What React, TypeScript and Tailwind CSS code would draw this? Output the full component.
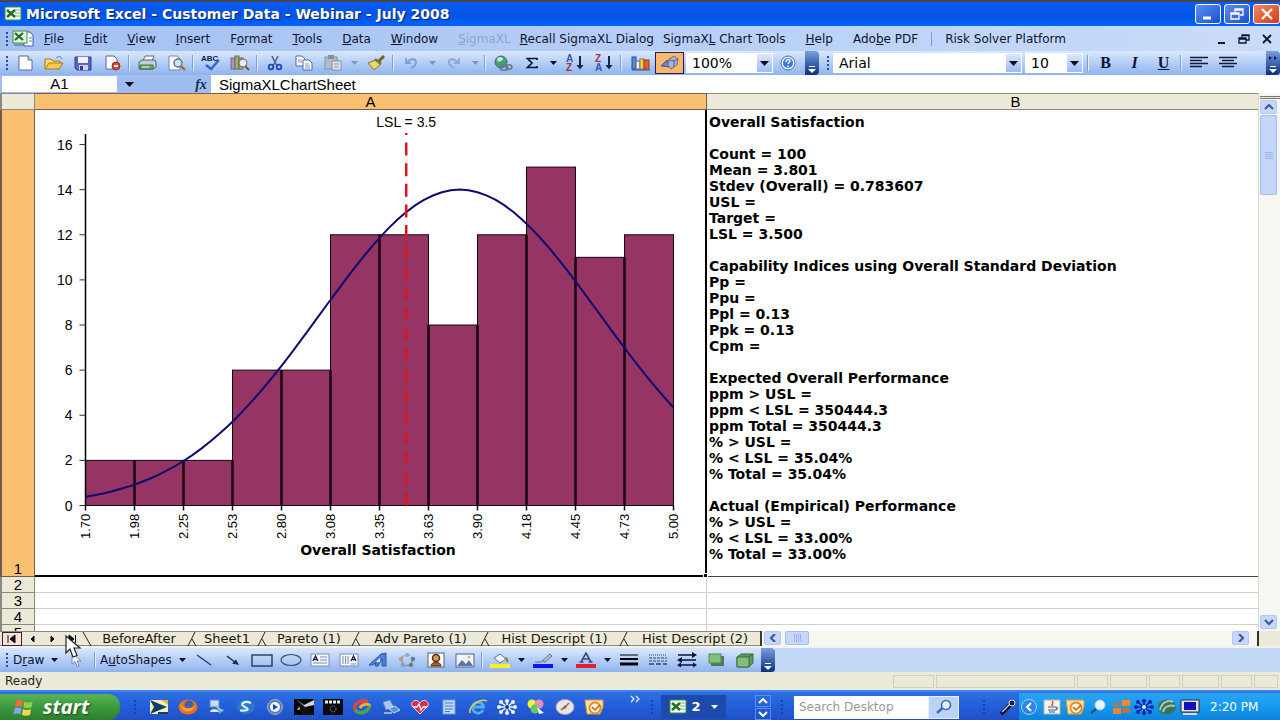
import { useState, type ReactNode } from 'react';

const FONT_UI = "font-['DejaVu_Sans',Verdana,sans-serif]";
const FONT_CELL = "font-['Liberation_Sans',Arial,sans-serif]";

/* ---------- shared bits ---------- */

function Icon({ children, w = 20, h = 16 }: { children: ReactNode; w?: number; h?: number }) {
  return (
    <svg width={w} height={h} viewBox={`0 0 ${w} ${h}`} fill="none" className="shrink-0" aria-hidden="true">
      {children}
    </svg>
  );
}

function ToolButton({ label, children, active }: { label: string; children: ReactNode; active?: boolean }) {
  return (
    <button
      type="button"
      aria-label={label}
      className={`flex h-[22px] w-[29px] shrink-0 items-center justify-center ${
        active ? 'border border-[#1c1c6e] bg-[#fdb768]' : ''
      }`}
    >
      {children}
    </button>
  );
}

function ArrowButton({ label, dim }: { label: string; dim?: boolean }) {
  return (
    <button type="button" aria-label={label} className="flex h-[22px] w-[14px] shrink-0 items-center justify-center">
      <Icon w={7} h={4}>
        <path d="M0 0h7L3.5 4z" fill={dim ? '#7f95bd' : '#0b0b1c'} />
      </Icon>
    </button>
  );
}

function Sep() {
  return <span className="mx-[2px] h-4 w-[2px] shrink-0 border-l border-[#7d9bd3] bg-[#e4eefc]" />;
}

function Grip({ dark }: { dark?: boolean }) {
  const color = dark ? '#1743a8' : '#2c4f96';
  return (
    <Icon w={4} h={14}>
      {[0, 4, 8, 12].map((y) => (
        <rect key={y} x="0" y={y} width="2" height="2" fill={color} />
      ))}
    </Icon>
  );
}

function EndCap({ more }: { more?: boolean }) {
  return (
    <button
      type="button"
      aria-label="Toolbar options"
      className="flex h-6 w-[14px] shrink-0 flex-col items-center justify-end rounded-r-sm bg-linear-to-b from-[#7a9fe0] to-[#0b2e80] pb-[2px]"
    >
      <Icon w={8} h={20}>
        {more && <path d="M0 3l3 2-3 2zM5 3l3 2-3 2z" fill="#0b1c4c" />}
        <path d="M1 13.500h6" stroke="#fff" />
        <path d="M0 16h8l-4 4z" fill="#fff" />
      </Icon>
    </button>
  );
}

function DropBox({ label, value, width }: { label: string; value: string; width: string }) {
  return (
    <div className="flex h-5 shrink-0 items-center bg-white">
      <select
        aria-label={label}
        className={`h-5 appearance-none bg-white pl-[6px] text-[14px] leading-5 text-black outline-none ${width}`}
      >
        <option>{value}</option>
      </select>
      <span className="mr-px flex h-[18px] w-[15px] items-center justify-center bg-linear-to-b from-[#dce9fc] to-[#9dbcf0]">
        <Icon w={9} h={5}>
          <path d="M0 0h9L4.5 5z" fill="#0b0b1c" />
        </Icon>
      </span>
    </div>
  );
}

/* ---------- icons ---------- */

const ExcelIcon = () => (
  <Icon w={18} h={16}>
    <rect x="1" y="1" width="16" height="13" rx="1" fill="#f4fbf1" stroke="#3d9440" />
    <path d="M11 4h5M11 7h5M11 10h5" stroke="#7bb77d" />
    <path d="M3 4l8 7M11 4l-8 7" stroke="#1f6f27" strokeWidth="2.4" />
  </Icon>
);

const ExcelDocIcon = () => (
  <Icon w={22} h={18}>
    <path d="M12 2h6l3 3v11h-9z" fill="#fff" stroke="#3c5fae" />
    <rect x="1" y="1" width="14" height="12" fill="#e2f4dd" stroke="#3d9440" />
    <path d="M3 3l8 7M11 3l-8 7" stroke="#1f6f27" strokeWidth="2.200" />
    <path d="M17 8h3M17 11h3" stroke="#5d7cc0" />
    <path d="M2 15h10" stroke="#4c5a86" />
  </Icon>
);

const NewIcon = () => (
  <Icon>
    <path d="M4 1h9l4 4v10H4z" fill="#fff" stroke="#5a6b95" />
    <path d="M13 1v4h4" fill="#cfdcf5" stroke="#5a6b95" />
  </Icon>
);
const OpenIcon = () => (
  <Icon>
    <path d="M1 14V4h6l2 2h7v3" fill="#fbd873" stroke="#a8781b" />
    <path d="M1 14l4-6h14l-4 6z" fill="#ffc94f" stroke="#a8781b" />
    <path d="M12 3c2-2 5-2 6 1" stroke="#4a7fc9" />
  </Icon>
);
const SaveIcon = () => (
  <Icon>
    <path d="M2 2h16v13H4l-2-2z" fill="#5b63c4" stroke="#343b91" />
    <rect x="5" y="2" width="10" height="6" fill="#f0f3fd" />
    <rect x="6" y="10" width="9" height="5" fill="#cdd3ea" />
    <rect x="7" y="11" width="3" height="4" fill="#343b91" />
  </Icon>
);
const PermissionIcon = () => (
  <Icon>
    <path d="M4 1h8l3 3v10H4z" fill="#fff" stroke="#5a6b95" />
    <circle cx="14" cy="11" r="4" fill="#d8492c" stroke="#a12c15" />
    <path d="M12 11h4" stroke="#fff" strokeWidth="2" />
  </Icon>
);
const PrintIcon = () => (
  <Icon>
    <path d="M6 6l2-5h9l-2 5z" fill="#fff" stroke="#5b6d84" />
    <path d="M2 7l3-2h13l1 2v5l-3 2H2z" fill="#c3cfd2" stroke="#53646f" />
    <path d="M3 10h13v4H3z" fill="#71a873" stroke="#3d6e46" />
    <path d="M5 12h7" stroke="#e9f5e4" />
  </Icon>
);
const PreviewIcon = () => (
  <Icon>
    <path d="M3 1h8l3 3v11H3z" fill="#fff" stroke="#6f86b8" />
    <circle cx="12" cy="8" r="4" fill="#cfe2f6" stroke="#5f6c80" strokeWidth="1.4" />
    <path d="M15 11l4 4" stroke="#b5621f" strokeWidth="2.4" />
  </Icon>
);
const SpellIcon = () => (
  <Icon h={18}>
    <text x="0" y="7" className="fill-[#0d1a4d] font-['Liberation_Sans',Arial,sans-serif] text-[8px] font-bold">
      ABC
    </text>
    <path d="M5 11l5 4 8-9" stroke="#3d63c9" strokeWidth="2.4" />
  </Icon>
);
const ResearchIcon = () => (
  <Icon>
    <rect x="1" y="3" width="4" height="11" fill="#b48cc6" stroke="#7c5d9c" />
    <rect x="5" y="1" width="4" height="13" fill="#8bb874" stroke="#567e45" />
    <rect x="9" y="3" width="4" height="11" fill="#dc9a6a" stroke="#93563a" />
    <circle cx="13" cy="8" r="4" fill="#e3edf8" stroke="#616f7f" />
    <path d="M15 11l4 4" stroke="#7a5a2a" strokeWidth="2" />
  </Icon>
);
const CutIcon = () => (
  <Icon>
    <path d="M7 1l5 10M13 1L8 11" stroke="#49679e" strokeWidth="1.6" />
    <circle cx="6" cy="12" r="2.3" stroke="#1e4bb3" strokeWidth="1.8" />
    <circle cx="14" cy="12" r="2.3" stroke="#1e4bb3" strokeWidth="1.8" />
  </Icon>
);
const CopyIcon = () => (
  <Icon>
    <path d="M2 1h6l3 3v7H2z" fill="#fff" stroke="#4a6bb5" />
    <path d="M9 5h6l3 3v7H9z" fill="#fff" stroke="#4a6bb5" />
    <path d="M4 5h4M4 7h4M11 9h4M11 11h5M11 13h5" stroke="#7c97cf" />
  </Icon>
);
const PasteIcon = () => (
  <Icon>
    <rect x="2" y="2" width="12" height="12" fill="#b3bccb" stroke="#8791a3" />
    <rect x="5" y="0" width="6" height="4" fill="#8791a3" />
    <path d="M9 6h9v9H9z" fill="#e1e6ee" stroke="#8791a3" />
    <path d="M11 9h5M11 12h5" stroke="#8791a3" />
  </Icon>
);
const PainterIcon = () => (
  <Icon>
    <path d="M18 1l-6 6" stroke="#7a5a1e" strokeWidth="3" />
    <path d="M2 8l8-3 5 4-7 6z" fill="#e9d46e" stroke="#8c7423" />
    <path d="M9 4l6 5" stroke="#6d7a35" strokeWidth="2.500" />
  </Icon>
);
const UndoIcon = () => (
  <Icon>
    <path d="M5 3v5h5M6 8c3-5 10-5 9 0-.5 3-3 4-5 5" stroke="#7e9fd8" strokeWidth="1.8" />
  </Icon>
);
const RedoIcon = () => (
  <Icon>
    <path d="M15 3v5h-5M14 8C11 3 4 3 5 8c.5 3 3 4 5 5" stroke="#8fa7d2" strokeWidth="1.8" />
  </Icon>
);
const LinkIcon = () => (
  <Icon>
    <circle cx="8" cy="7" r="6" fill="#4a9d6e" stroke="#3268a2" />
    <path d="M4 4c2-3 6-2 6 0s-3 2-5 3z" fill="#c2e8c3" />
    <ellipse cx="11" cy="13" rx="4" ry="2.2" stroke="#6b7787" strokeWidth="1.5" />
    <ellipse cx="16" cy="12" rx="3" ry="2.2" stroke="#6b7787" strokeWidth="1.5" />
  </Icon>
);
const SumIcon = () => (
  <Icon>
    <path d="M15 5V3.500H5.500L10 8l-4.500 4.500H15V11" stroke="#0d1433" strokeWidth="1.700" />
  </Icon>
);
function SortIcon({ top, bottom, topColor, bottomColor }: { top: string; bottom: string; topColor: string; bottomColor: string }) {
  return (
    <Icon h={18}>
      <text x="1" y="8" fill={topColor} className="font-['Liberation_Sans',Arial,sans-serif] text-[10px] font-bold">
        {top}
      </text>
      <text x="1" y="17" fill={bottomColor} className="font-['Liberation_Sans',Arial,sans-serif] text-[10px] font-bold">
        {bottom}
      </text>
      <path d="M15 2v12" stroke="#1b2347" strokeWidth="2" />
      <path d="M11.500 11h7L15 15.500z" fill="#1b2347" />
    </Icon>
  );
}
const ChartIcon = () => (
  <Icon>
    <rect x="1" y="2" width="4" height="12" fill="#5d89d2" stroke="#244a91" />
    <rect x="5" y="6" width="4" height="8" fill="#e9eef8" stroke="#5a6b95" />
    <rect x="9" y="4" width="4" height="10" fill="#f3cf58" stroke="#9b7a1a" />
    <rect x="13" y="5" width="5" height="9" fill="#e2602c" stroke="#973f10" />
    <path d="M1 15h18" stroke="#3c4c78" />
  </Icon>
);
const DrawingIcon = () => (
  <Icon>
    <path d="M1 11l6-6 2 7z" fill="#6c85c9" stroke="#3f57a1" />
    <path d="M9 4l5-3 4 3-1 6-6 4-3-4z" fill="#a9b1cc" stroke="#6b7294" />
    <path d="M9 5l5 1 4-2M14 6v6" stroke="#5b648c" />
  </Icon>
);
const HelpIcon = () => (
  <Icon>
    <circle cx="10" cy="8" r="7" fill="#e8f1fe" stroke="#4671bd" />
    <circle cx="10" cy="8" r="5" fill="#3f79d6" />
    <path d="M8 7c0-3 4-3 4-1 0 1.500-2 1.500-2 3M10 10.500v1.500" stroke="#fff" strokeWidth="1.4" />
  </Icon>
);
const AlignIcon = ({ center }: { center?: boolean }) => (
  <Icon h={14}>
    <path d={center ? 'M1 1.500h18M4 4.500h12M1 7.500h18M4 10.500h12' : 'M1 1.500h18M1 4.500h12M1 7.500h18M1 10.500h12'} stroke="#101a3c" strokeWidth="1.500" />
  </Icon>
);

/* ---------- title + menus ---------- */

function TitleBar() {
  return (
    <header className="flex h-[26px] shrink-0 items-center gap-1 border-t-2 border-[#46464a] bg-linear-to-b from-[#0a5cf5] via-[#0453e4] to-[#0563fb] pl-1">
      <ExcelIcon />
      <h1 className="text-[14px] leading-5 font-bold text-white [text-shadow:1px_1px_1px_#0a246a]">
        Microsoft Excel - Customer Data - Webinar - July 2008
      </h1>
      <div className="ml-auto flex gap-[3px]">
        <button type="button" aria-label="Minimize" className="flex h-5 w-[26px] items-center justify-center rounded-[3px] border border-white bg-linear-to-br from-[#5b8df5] to-[#1a4fd0]">
          <Icon w={14} h={12}>
            <path d="M2 10h8" stroke="#fff" strokeWidth="3" />
          </Icon>
        </button>
        <button type="button" aria-label="Restore" className="flex h-5 w-[26px] items-center justify-center rounded-[3px] border border-white bg-linear-to-br from-[#5b8df5] to-[#1a4fd0]">
          <Icon w={14} h={12}>
            <path d="M5 4V1h8v6h-3M5 2h8M1 5h8v6H1zM1 6h8" stroke="#fff" strokeWidth="1.300" />
          </Icon>
        </button>
        <button type="button" aria-label="Close" className="flex h-5 w-[27px] items-center justify-center rounded-[3px] border border-white bg-linear-to-br from-[#ee8560] to-[#d03c17]">
          <Icon w={14} h={12}>
            <path d="M2 1l10 10M12 1L2 11" stroke="#fff" strokeWidth="2.200" />
          </Icon>
        </button>
      </div>
    </header>
  );
}

const menus = [
  { pre: '', key: 'F', post: 'ile' },
  { pre: '', key: 'E', post: 'dit' },
  { pre: '', key: 'V', post: 'iew' },
  { pre: '', key: 'I', post: 'nsert' },
  { pre: 'F', key: 'o', post: 'rmat' },
  { pre: '', key: 'T', post: 'ools' },
  { pre: '', key: 'D', post: 'ata' },
  { pre: '', key: 'W', post: 'indow' },
  { pre: '', key: 'S', post: 'igmaXL', off: true },
  { pre: '', key: 'R', post: 'ecall SigmaXL Dialog', tight: true },
  { pre: 'SigmaX', key: 'L', post: ' Chart Tools', tight: true },
  { pre: '', key: 'H', post: 'elp' },
  { pre: 'Ado', key: 'b', post: 'e PDF' },
];

function MenuBar() {
  return (
    <nav className="flex h-[25px] shrink-0 items-center bg-linear-to-r from-[#a3c0f3] to-[#c9dcfa] pl-[6px] text-[12px] text-[#0e1430]">
      <Grip />
      <span className="ml-[2px]">
        <ExcelDocIcon />
      </span>
      <ul className="flex items-center">
        {menus.map((m) => (
          <li key={m.key + m.post} className={m.tight ? 'ml-[9px]' : 'ml-5 first:ml-[10px]'}>
            <button type="button" disabled={m.off} className={m.off ? 'text-[#8fa3cc]' : ''}>
              {m.pre}
              <u>{m.key}</u>
              {m.post}
            </button>
          </li>
        ))}
      </ul>
      <span className="mx-[13px] h-[14px] w-px bg-[#7d9bd3]" />
      <button type="button">Risk Solver Platform</button>
      <div className="mr-[6px] ml-auto flex gap-[9px]">
        <button type="button" aria-label="Minimize workbook">
          <Icon w={14} h={12}>
            <path d="M4 10h7" stroke="#0e1430" strokeWidth="2" />
          </Icon>
        </button>
        <button type="button" aria-label="Restore workbook">
          <Icon w={14} h={12}>
            <path d="M5 4V2h7v5h-3M5 2.500h7M2 5h7v5H2zM2 6h7" stroke="#0e1430" strokeWidth="1.300" />
          </Icon>
        </button>
        <button type="button" aria-label="Close workbook">
          <Icon w={14} h={12}>
            <path d="M3 2l8 8M11 2l-8 8" stroke="#0e1430" strokeWidth="1.800" />
          </Icon>
        </button>
      </div>
    </nav>
  );
}

/* ---------- toolbars ---------- */

function Toolbar() {
  return (
    <div className="flex h-6 shrink-0 items-center bg-linear-to-b from-[#dae8fd] to-[#8fb3ee] pl-[6px]">
      <Grip />
      <ToolButton label="New"><NewIcon /></ToolButton>
      <ToolButton label="Open"><OpenIcon /></ToolButton>
      <ToolButton label="Save"><SaveIcon /></ToolButton>
      <ToolButton label="Permission"><PermissionIcon /></ToolButton>
      <Sep />
      <ToolButton label="Print"><PrintIcon /></ToolButton>
      <ToolButton label="Print Preview"><PreviewIcon /></ToolButton>
      <Sep />
      <ToolButton label="Spelling"><SpellIcon /></ToolButton>
      <ToolButton label="Research"><ResearchIcon /></ToolButton>
      <Sep />
      <ToolButton label="Cut"><CutIcon /></ToolButton>
      <ToolButton label="Copy"><CopyIcon /></ToolButton>
      <ToolButton label="Paste"><PasteIcon /></ToolButton>
      <ArrowButton label="Paste options" dim />
      <ToolButton label="Format Painter"><PainterIcon /></ToolButton>
      <Sep />
      <ToolButton label="Undo"><UndoIcon /></ToolButton>
      <ArrowButton label="Undo list" dim />
      <ToolButton label="Redo"><RedoIcon /></ToolButton>
      <ArrowButton label="Redo list" dim />
      <Sep />
      <ToolButton label="Hyperlink"><LinkIcon /></ToolButton>
      <ToolButton label="AutoSum"><SumIcon /></ToolButton>
      <ArrowButton label="More functions" />
      <ToolButton label="Sort Ascending">
        <SortIcon top="A" bottom="Z" topColor="#3559b5" bottomColor="#a8324a" />
      </ToolButton>
      <ToolButton label="Sort Descending">
        <SortIcon top="Z" bottom="A" topColor="#a8324a" bottomColor="#3559b5" />
      </ToolButton>
      <Sep />
      <span className="w-[2px]" />
      <ToolButton label="Chart Wizard"><ChartIcon /></ToolButton>
      <ToolButton label="Drawing" active><DrawingIcon /></ToolButton>
      <span className="w-[2px]" />
      <DropBox label="Zoom" value="100%" width="w-[71px]" />
      <ToolButton label="Help"><HelpIcon /></ToolButton>
      <span className="w-[3px]" />
      <EndCap />
      <span className="w-2" />
      <Grip />
      <span className="w-[2px]" />
      <DropBox label="Font" value="Arial" width="w-[173px]" />
      <span className="w-[3px]" />
      <DropBox label="Font Size" value="10" width="w-[42px]" />
      <span className="w-[2px]" />
      <Sep />
      <div className="flex font-['Liberation_Serif',serif] text-[16px] font-bold text-[#0d1433]">
        <button type="button" className="w-[29px]">B</button>
        <button type="button" className="w-[29px] italic">I</button>
        <button type="button" className="w-[29px] underline">U</button>
      </div>
      <Sep />
      <ToolButton label="Align Left"><AlignIcon /></ToolButton>
      <ToolButton label="Center"><AlignIcon center /></ToolButton>
      <span className="ml-auto">
        <EndCap more />
      </span>
    </div>
  );
}

function FormulaBar() {
  const [formula, setFormula] = useState('SigmaXLChartSheet');
  return (
    <div className={`flex h-[18px] shrink-0 items-stretch bg-[#9fbdf1] pl-[2px] text-[15px] ${FONT_CELL}`}>
      <input aria-label="Name Box" defaultValue="A1" className="my-px w-[115px] bg-white text-center leading-4 outline-none" />
      <button type="button" aria-label="Name list" className="flex w-6 items-center justify-center">
        <Icon w={9} h={5}>
          <path d="M0 0h9L4.500 5z" fill="#0b0b1c" />
        </Icon>
      </button>
      <button type="button" aria-label="Insert Function" className="ml-auto w-5 font-['Liberation_Serif',serif] text-[14px] leading-[17px] font-bold text-[#1c2750] italic">
        fx
      </button>
      <input
        aria-label="Formula Bar"
        value={formula}
        onChange={(e) => setFormula(e.target.value)}
        className="w-[calc(100%-209px)] shrink-0 bg-white pl-2 leading-[17px] outline-none"
      />
    </div>
  );
}

/* ---------- histogram ---------- */

const counts = [2, 2, 2, 6, 6, 12, 12, 8, 12, 15, 11, 12];
const xLabels = ['1.70', '1.98', '2.25', '2.53', '2.80', '3.08', '3.35', '3.63', '3.90', '4.18', '4.45', '4.73', '5.00'];
const yLabels = [0, 2, 4, 6, 8, 10, 12, 14, 16];

const X0 = 50.5;
const BIN = 49;
const Y0 = 395.5;
const UNIT = 22.56;
const MEAN = 3.801;
const SD = 0.783607;
const LSL = 3.5;

const toX = (v: number) => X0 + ((v - 1.7) / 3.3) * BIN * 12;
const toY = (n: number) => Y0 - n * UNIT;

const curve = Array.from({ length: 67 }, (_, i) => {
  const v = 1.7 + i * 0.05;
  const n = (27.5 / (SD * Math.sqrt(2 * Math.PI))) * Math.exp(-((v - MEAN) ** 2) / (2 * SD * SD));
  return `${toX(v).toFixed(1)},${toY(n).toFixed(1)}`;
}).join(' ');

function Histogram() {
  return (
    <svg width="670" height="464" viewBox="0 0 670 464" role="img" aria-label="Histogram of Overall Satisfaction" className={FONT_CELL}>
      {counts.map((n, i) => (
        <rect key={i} x={X0 + i * BIN} y={toY(n)} width={BIN} height={n * UNIT} fill="#963464" stroke="#14040d" />
      ))}
      {counts.slice(1).map((n, i) => (
        <path key={i} d={`M${X0 + (i + 1) * BIN} ${toY(Math.min(n, counts[i]))}V${Y0}`} stroke="#14040d" strokeWidth="2.500" />
      ))}
      <path d={`M${X0} 24V${Y0}`} stroke="#000" strokeWidth="1.500" />
      {yLabels.map((n) => (
        <g key={n}>
          <path d={`M${X0 - 6} ${toY(n)}h6`} stroke="#333" />
          <text x={X0 - 13} y={toY(n) + 5} textAnchor="end" className="text-[14px]">
            {n}
          </text>
        </g>
      ))}
      {xLabels.map((label, i) => (
        <g key={label}>
          <path d={`M${X0 + i * BIN} ${Y0}v5`} stroke="#111" strokeWidth="1.500" />
          <text transform={`translate(${X0 + i * BIN + 4} 429) rotate(-90)`} className="text-[13px]">
            {label}
          </text>
        </g>
      ))}
      <polyline points={curve} fill="none" stroke="#0b0b70" strokeWidth="2" />
      <path d={`M${toX(LSL)} 23v${Y0 - 23}`} stroke="#e0141e" strokeWidth="2.500" strokeDasharray="13 7.600" strokeDashoffset="11" />
      <text x={toX(LSL)} y="17" textAnchor="middle" className="text-[14px]">
        LSL = 3.5
      </text>
      <text x="343" y="445" textAnchor="middle" className="font-['DejaVu_Sans',Verdana,sans-serif] text-[14px] font-bold">
        Overall Satisfaction
      </text>
    </svg>
  );
}

/* ---------- sheet ---------- */

const stats = [
  'Overall Satisfaction',
  '',
  'Count = 100',
  'Mean = 3.801',
  'Stdev (Overall) = 0.783607',
  'USL =',
  'Target =',
  'LSL = 3.500',
  '',
  'Capability Indices using Overall Standard Deviation',
  'Pp =',
  'Ppu =',
  'Ppl = 0.13',
  'Ppk = 0.13',
  'Cpm =',
  '',
  'Expected Overall Performance',
  'ppm > USL =',
  'ppm < LSL = 350444.3',
  'ppm Total = 350444.3',
  '% > USL =',
  '% < LSL = 35.04%',
  '% Total = 35.04%',
  '',
  'Actual (Empirical) Performance',
  '% > USL =',
  '% < LSL = 33.00%',
  '% Total = 33.00%',
];

function Sheet() {
  return (
    <div className="min-w-0 flex-1 overflow-hidden bg-white">
      <table className="w-full table-fixed border-separate border-spacing-0 text-[15px] leading-[15px]">
        <colgroup>
          <col className="w-[35px]" />
          <col className="w-[672px]" />
          <col />
        </colgroup>
        <thead>
          <tr className="h-[17px]">
            <td className="border-t border-r border-b border-l-2 border-[#8a8a80] bg-[#ece9d8]" />
            <th className="border-t border-r border-b border-[#7a5f50] bg-[#fbc070] p-0 font-normal">A</th>
            <th className="border-t border-b border-[#8a8a80] bg-[#ece9d8] p-0 pl-[66px] font-normal">B</th>
          </tr>
        </thead>
        <tbody>
          <tr className="h-[467px]">
            <th className="border-r border-b border-l-2 border-[#6d5a5a] bg-[#fbc070] p-0 align-bottom font-normal">1</th>
            <td className="relative border-r-2 border-b-2 border-black p-0 align-top">
              <Histogram />
              <span className="absolute -right-[3px] -bottom-[3px] size-[5px] border border-white bg-black" />
            </td>
            <td className="border-b border-[#444] p-0 pt-1 pl-[2px] align-top font-bold">
              <ul className={FONT_UI + ' text-[14px] leading-4'}>
                {stats.map((line, i) => (
                  <li key={i} className="h-4 whitespace-nowrap">
                    {line}
                  </li>
                ))}
              </ul>
            </td>
          </tr>
          {[2, 3, 4, 5].map((n) => (
            <tr key={n} className="h-4">
              <th className="border-r border-b border-l-2 border-[#8a8a80] bg-[#ece9d8] p-0 font-normal">{n}</th>
              <td className="border-r border-b border-[#d0d0d0] p-0" />
              <td className="border-b border-[#d0d0d0] p-0" />
            </tr>
          ))}
        </tbody>
      </table>
    </div>
  );
}

function ScrollButton({ label, d }: { label: string; d: string }) {
  return (
    <button type="button" aria-label={label} className="flex h-[14px] w-[17px] shrink-0 items-center justify-center rounded-[2px] border border-[#b4c8f6] bg-[#c6d6fc]">
      <Icon w={10} h={8}>
        <path d={d} stroke="#3f5b93" strokeWidth="2.200" />
      </Icon>
    </button>
  );
}

function VerticalScroll() {
  return (
    <div className="flex w-[22px] shrink-0 flex-col items-start gap-px border-l border-[#d9d8cc] bg-[#f7f7f1] pt-[3px] pb-[2px] pl-px">
      <span className="h-[3px] w-5 border-y border-[#77776b] bg-[#ece9d8]" />
      <ScrollButton label="Scroll up" d="M1 6l4-4 4 4" />
      <span className="flex h-[80px] w-[17px] flex-col items-center justify-center gap-px rounded-[2px] border border-[#a3bcf3] bg-[#c6d6fc]">
        {[0, 1, 2, 3].map((n) => (
          <span key={n} className="h-px w-2 bg-[#9ab4ee]" />
        ))}
      </span>
      <span className="flex-1" />
      <ScrollButton label="Scroll down" d="M1 2l4 4 4-4" />
    </div>
  );
}

const tabs = [
  { name: 'BeforeAfter', width: 'w-[94px]' },
  { name: 'Sheet1', width: 'w-[58px]' },
  { name: 'Pareto (1)', width: 'w-[82px]' },
  { name: 'Adv Pareto (1)', width: 'w-[117px]' },
  { name: 'Hist Descript (1)', width: 'w-[127px]' },
  { name: 'Hist Descript (2)', width: 'w-[130px]' },
];

const navs = [
  { label: 'First sheet', d: 'M2 1v8M9 1v8L4 5z' },
  { label: 'Previous sheet', d: 'M8 2v6L5 5z' },
  { label: 'Next sheet', d: 'M5 2v6l3-3z' },
  { label: 'Last sheet', d: 'M9.500 1v8M3 1v8l5-4z' },
];

function SheetTabs() {
  return (
    <div className="flex h-[17px] shrink-0 items-start border-b-2 border-[#f3f3ee] bg-[#f7f7f1]">
      <div className="relative flex h-[15px] items-center border-y border-[#8a8a80] bg-[#ece9d8] pl-[2px]">
        {navs.map((nav, i) => (
          <button
            key={nav.label}
            type="button"
            aria-label={nav.label}
            className={`flex h-[14px] w-5 items-center justify-center ${i === 0 ? 'border border-[#2b1c5e] bg-[#fde3c8]' : ''}`}
          >
            <Icon w={12} h={10}>
              <path d={nav.d} fill="#0b0b1c" stroke="#0b0b1c" />
            </Icon>
          </button>
        ))}
        <Icon w={10} h={14}>
          <path d="M1 0l8 14" stroke="#222" />
        </Icon>
        <svg width="20" height="26" viewBox="0 0 20 26" className="absolute top-[3px] left-[64px] z-10" aria-hidden="true">
          <path d="M2 1v17l4-4 3 8 4-1.500-3-7.500h6z" fill="#fff" stroke="#222" strokeWidth="1.200" />
        </svg>
      </div>
      <div className="flex h-[15px] items-center border-y border-[#8a8a80] bg-[#ece9d8] text-[13px] leading-[13px] text-[#16160f]">
        {tabs.map((tab, i) => (
          <span key={tab.name} className="flex items-center">
            {i > 0 && (
              <Icon w={12} h={14}>
                <path d="M9 0L2 14M6 7l4 7" stroke="#222" />
              </Icon>
            )}
            <button type="button" className={`text-center whitespace-nowrap ${tab.width}`}>
              {tab.name}
            </button>
          </span>
        ))}
      </div>
      <span className="mr-[2px] h-[15px] w-[2px] bg-[#3b3b33]" />
      <ScrollButton label="Scroll left" d="M7 0L3 4l4 4" />
      <span className="ml-[4px] flex h-[14px] w-6 items-center justify-center gap-px rounded-[2px] border border-[#a3bcf3] bg-[#c6d6fc]">
        {[0, 1, 2, 3].map((n) => (
          <span key={n} className="h-2 w-px bg-[#9ab4ee]" />
        ))}
      </span>
      <span className="flex-1" />
      <ScrollButton label="Scroll right" d="M3 0l4 4-4 4" />
      <span className="ml-2 h-[15px] w-[2px] bg-[#33332c]" />
      <span className="h-[15px] w-[21px] bg-[#ece9d8]" />
    </div>
  );
}

/* ---------- drawing toolbar ---------- */

function DrawingBar() {
  return (
    <div className="flex h-6 shrink-0 bg-[#c4d8f7]">
      <div className="flex items-center bg-linear-to-b from-[#dae8fd] to-[#8fb3ee] pl-[6px] text-[12px] text-[#0e1430]">
        <Grip />
        <button type="button" className="ml-[3px] w-[34px] text-left">
          D<u>r</u>aw
        </button>
        <ArrowButton label="Draw menu" />
        <ToolButton label="Select Objects">
          <Icon>
            <path d="M6 1v11l3-2.500 2 5 2-1-2-4.500h4z" fill="#f6faff" stroke="#7389b4" />
          </Icon>
        </ToolButton>
        <span className="w-[2px]" />
        <Sep />
        <button type="button" className="ml-[2px] w-[75px] text-left">
          A<u>u</u>toShapes
        </button>
        <ArrowButton label="AutoShapes menu" />
        <ToolButton label="Line">
          <Icon><path d="M3 3l14 10" stroke="#2a3763" strokeWidth="1.300" /></Icon>
        </ToolButton>
        <ToolButton label="Arrow">
          <Icon>
            <path d="M4 4l9 7" stroke="#1c264a" strokeWidth="1.300" />
            <path d="M16 13l-7-1.500 4-4z" fill="#1c264a" />
          </Icon>
        </ToolButton>
        <ToolButton label="Rectangle">
          <Icon w={22}><rect x="1" y="3" width="20" height="11" stroke="#2a3763" strokeWidth="1.400" /></Icon>
        </ToolButton>
        <ToolButton label="Oval">
          <Icon w={22}><ellipse cx="11" cy="8" rx="10" ry="5.500" stroke="#3a466e" strokeWidth="1.200" /></Icon>
        </ToolButton>
        <ToolButton label="Text Box">
          <Icon>
            <rect x="1" y="2" width="18" height="12" fill="#f5f8fe" stroke="#7c8bab" />
            <path d="M3 9l2.500-5L8 9M4 7.500h3" stroke="#1c264a" strokeWidth="1.300" />
            <path d="M10 5h7M10 8h7M3 11h14" stroke="#7c8bab" />
          </Icon>
        </ToolButton>
        <ToolButton label="Vertical Text Box">
          <Icon>
            <rect x="1" y="2" width="18" height="12" fill="#f5f8fe" stroke="#7c8bab" />
            <path d="M12 9l2.500-5L17 9M13 7.500h3" stroke="#1c264a" strokeWidth="1.300" />
            <path d="M4 4v8M6.500 4v8M9 4v8M12 12h5" stroke="#7c8bab" />
          </Icon>
        </ToolButton>
        <ToolButton label="Insert WordArt">
          <Icon>
            <path d="M1 13L13 2l5-1v13h-4V7l-4 7H7l1-3-4 2z" fill="#4a80da" stroke="#2a55ae" />
            <path d="M8 10l4-4v4z" fill="#e6effc" />
          </Icon>
        </ToolButton>
        <ToolButton label="Insert Diagram">
          <Icon>
            <circle cx="10" cy="8" r="5.500" stroke="#7c8bab" strokeWidth="1.300" strokeDasharray="4 2" />
            <circle cx="10" cy="3" r="2" fill="#9ba7c4" />
            <circle cx="16" cy="7" r="2.300" fill="#6c7ea8" />
            <circle cx="4" cy="7" r="2.300" fill="#b9a078" />
            <circle cx="6" cy="13" r="2" fill="#8c98b5" />
            <circle cx="14" cy="13" r="2" fill="#5e7e68" />
          </Icon>
        </ToolButton>
        <ToolButton label="Insert Clip Art">
          <Icon>
            <rect x="2" y="1" width="16" height="14" fill="#fdfdfd" stroke="#5e6272" />
            <circle cx="10" cy="6" r="3.500" fill="#d29a5b" stroke="#553212" strokeWidth="1.500" />
            <path d="M5 14c0-5 10-5 10 0z" fill="#9a6432" stroke="#553212" />
          </Icon>
        </ToolButton>
        <ToolButton label="Insert Picture">
          <Icon>
            <rect x="1" y="2" width="18" height="13" fill="#eef4fc" stroke="#5e6272" />
            <path d="M2 14l5-6 4 4 3-4 4 6z" fill="#5b78a5" />
            <circle cx="14" cy="5" r="1.500" fill="#eab64a" />
          </Icon>
        </ToolButton>
        <Sep />
        <ToolButton label="Fill Color">
          <Icon>
            <path d="M4 6l6-4 6 5-6 4z" fill="#eef3fb" stroke="#64708c" />
            <path d="M15 6c2 1 3 2 2 4" stroke="#6c8b3a" strokeWidth="2" />
            <rect x="0" y="12" width="20" height="4" fill="#f5ef1e" />
          </Icon>
        </ToolButton>
        <ArrowButton label="Fill colors" />
        <ToolButton label="Line Color">
          <Icon>
            <path d="M2 10h7M9 9l8-7 2 2-7 6z" fill="#b6c1d6" stroke="#64708c" />
            <rect x="0" y="12" width="20" height="4" fill="#0b16f0" />
          </Icon>
        </ToolButton>
        <ArrowButton label="Line colors" />
        <ToolButton label="Font Color">
          <Icon>
            <path d="M5 10l5-9 5 9M7 7h6M3.500 10h4M12.500 10h4" stroke="#334d8e" strokeWidth="1.600" />
            <rect x="0" y="12" width="20" height="4" fill="#e0202a" />
          </Icon>
        </ToolButton>
        <ArrowButton label="Font colors" />
        <ToolButton label="Line Style">
          <Icon><path d="M1 3h18" stroke="#000" /><path d="M1 7h18" stroke="#000" strokeWidth="2" /><path d="M1 12h18" stroke="#000" strokeWidth="3" /></Icon>
        </ToolButton>
        <ToolButton label="Dash Style">
          <Icon><path d="M1 3h18" stroke="#3a466e" strokeDasharray="1 1" /><path d="M1 6h18M1 9h18" stroke="#3a466e" strokeDasharray="3 1" /><path d="M1 12h18" stroke="#000" strokeDasharray="5 2" /></Icon>
        </ToolButton>
        <ToolButton label="Arrow Style">
          <Icon>
            <path d="M1 3h16M3 8h16M3 13h14" stroke="#0e1430" strokeWidth="1.300" />
            <path d="M15 0l5 3-5 3zM5 5L0 8l5 3zM4 10.500L0 13l4 2.500zM16 10.500l4 2.500-4 2.500z" fill="#0e1430" />
          </Icon>
        </ToolButton>
        <ToolButton label="Shadow Style">
          <Icon><rect x="5" y="4" width="13" height="10" fill="#54735c" /><rect x="3" y="2" width="12" height="9" fill="#7fc07c" stroke="#4b8c4c" /></Icon>
        </ToolButton>
        <ToolButton label="3-D Style">
          <Icon><path d="M2 5l4-3h12v9l-4 4H2z" fill="#5c9a5e" stroke="#38703c" /><path d="M2 5h12v10H2z" fill="#83be80" stroke="#38703c" /><path d="M14 5l4-3" stroke="#38703c" /></Icon>
        </ToolButton>
        <span className="w-[2px]" />
        <EndCap />
      </div>
    </div>
  );
}

function StatusBar() {
  return (
    <footer className="flex h-[18px] shrink-0 items-center bg-[#ece9d8] pl-[5px] text-[12px] text-[#22221c]">
      <span className="h-[18px] leading-[18px]">Ready</span>
      <div className="mr-[2px] ml-auto flex gap-[2px]">
        <span className="h-[13px] w-[41px] border border-[#d3cfba]" />
        <span className="h-[13px] w-[139px] border border-[#d3cfba]" />
        <span className="h-[13px] w-[31px] border border-[#d3cfba]" />
        <span className="h-[13px] w-[37px] border border-[#d3cfba]" />
        <span className="h-[13px] w-[31px] border border-[#d3cfba]" />
        <span className="h-[13px] w-[37px] border border-[#d3cfba]" />
        <span className="h-[13px] w-[31px] border border-[#d3cfba]" />
        <span className="h-[13px] w-[24px] border border-[#d3cfba]" />
      </div>
    </footer>
  );
}

/* ---------- taskbar ---------- */

const snowDots = [[10, 2], [10, 14], [2, 8], [18, 8], [4, 3], [16, 13], [16, 3], [4, 13]];

function Snowflake({ color, core }: { color: string; core: string }) {
  return (
    <Icon>
      <path d="M10 2v12M3 8h14M5 4l10 8M15 4L5 12" stroke={color} strokeWidth="1.500" />
      {snowDots.map(([x, y]) => (
        <circle key={`${x}-${y}`} cx={x} cy={y} r="2" fill={color} />
      ))}
      <circle cx="10" cy="8" r="2" fill={core} />
    </Icon>
  );
}

const OutlookIcon = () => (
  <Icon>
    <path d="M1 1h18v7L16 15H3z" fill="#f9dfa0" stroke="#d8952f" />
    <circle cx="11" cy="9" r="5.500" fill="#fff3da" stroke="#e08a2a" strokeWidth="1.800" />
    <path d="M8 8l3 3 5-5" stroke="#b8661d" strokeWidth="1.500" />
  </Icon>
);

const quickLaunch = [
  {
    name: 'Media player',
    icon: <Icon><rect x="1" y="1" width="18" height="14" fill="#f3f0b8" /><path d="M1 1l17 7L1 15l4-7z" fill="#153a6b" /><path d="M12 1h7v5z" fill="#e9bb2c" /><path d="M9 14h10" stroke="#153a6b" strokeWidth="2" /></Icon>,
  },
  {
    name: 'Firefox',
    icon: <Icon><ellipse cx="10" cy="8" rx="9.500" ry="7.500" fill="#e8701c" /><circle cx="11" cy="6" r="4.500" fill="#3a5fb4" /><path d="M2 4c2 6 10 7 15 2-1 9-14 9-15-2z" fill="#f9a233" /></Icon>,
  },
  {
    name: 'Network',
    icon: <Icon><rect x="3" y="1" width="9" height="7" fill="#c8dcf4" stroke="#5d85c4" /><path d="M10 9l8 2-6 4z" fill="#5aa0d8" /><path d="M3 13c0-4 8-4 9 0z" fill="#d7eaf2" /><path d="M9 7l6 5" stroke="#98c0d8" strokeWidth="2" /></Icon>,
  },
  {
    name: 'Snagit',
    icon: <Icon><ellipse cx="10" cy="8" rx="9" ry="7" fill="#2a79c7" /><path d="M15 4C9 1 3 5 8 7.500S14 12 4 11.500" stroke="#dff1fb" strokeWidth="2.200" /></Icon>,
  },
  {
    name: 'Windows Media Player',
    icon: <Icon><circle cx="10" cy="8" r="7.500" fill="#4f7fd0" stroke="#b9a8a0" strokeWidth="1" /><circle cx="10" cy="8" r="5" fill="#f4f8fe" /><path d="M8 5l5 3-5 3z" fill="#174ab0" /></Icon>,
  },
  {
    name: 'Camera',
    icon: <Icon><rect x="0" y="0" width="20" height="16" fill="#050505" /><path d="M3 1l7 5 10-5v5l-9 2 5 7-8-5-5 1 3-4z" fill="#d6d6d6" /><path d="M3 1l7 6 9 9H8z" fill="#111" /></Icon>,
  },
  {
    name: 'Rode',
    icon: <Icon><rect x="0" y="0" width="20" height="16" fill="#0a0a0a" /><path d="M2 3h16" stroke="#e8e8e8" strokeWidth="3" strokeDasharray="3 1" /><circle cx="10" cy="10" r="3" stroke="#8f8f8f" strokeDasharray="1.500 1" /></Icon>,
  },
  {
    name: 'Picasa',
    icon: <Icon><path d="M3 11C1 4 10 0 16 3" stroke="#e04535" strokeWidth="3.500" /><path d="M8 9c2-4 8-5 10-2" stroke="#e9b62e" strokeWidth="3" /><path d="M3 11c4 5 12 3 15-4" stroke="#45a64a" strokeWidth="3.500" /></Icon>,
  },
  {
    name: 'Remote',
    icon: <Icon><path d="M2 3l7-2 4 7-8 3z" fill="#a6c6ec" stroke="#5e88c0" /><path d="M8 10l6-3 5 4-6 3z" fill="#5f8fd0" stroke="#c3d9f2" /><path d="M3 14h8" stroke="#8ab0dd" strokeWidth="2" /></Icon>,
  },
  {
    name: 'Health',
    icon: <Icon><path d="M10 15L2 7c-2-5 5-8 8-3 3-5 10-2 8 3z" fill="#d9304a" stroke="#f4d5da" /><path d="M3 8h4l2-3 2 6 2-3h4" stroke="#fff" strokeWidth="1.300" /></Icon>,
  },
  {
    name: 'Notepad',
    icon: <Icon><rect x="4" y="1" width="12" height="14" fill="#bcd9f8" stroke="#6e9bd6" /><path d="M6 4h8M6 7h8M6 10h8M6 12.500h5" stroke="#4878bc" /></Icon>,
  },
  {
    name: 'Internet Explorer',
    icon: <Icon><path d="M15 11a5.500 5.500 0 1 1 .5-3H6" stroke="#4fb3f3" strokeWidth="2.800" /><path d="M2 14C0 8 12-1 19 2" stroke="#eec34e" strokeWidth="1.600" /></Icon>,
  },
  { name: 'GoToMeeting', icon: <Snowflake color="#f2f5fb" core="#12388c" /> },
  {
    name: 'Paint',
    icon: <Icon><circle cx="6" cy="5" r="4.500" fill="#f0f04a" /><circle cx="13" cy="5" r="4.500" fill="#ef8bb8" /><circle cx="9" cy="10" r="4.500" fill="#67c764" /><path d="M11 8l7 6-5 1z" fill="#f4f4f4" /></Icon>,
  },
  {
    name: 'Clock',
    icon: <Icon><ellipse cx="10" cy="8" rx="9" ry="7.500" fill="#e8e4e8" stroke="#b0a6b6" /><path d="M10 8l4-4M10 8l-4 3" stroke="#c85a3a" strokeWidth="1.600" /><circle cx="10" cy="8" r="1.500" fill="#666" /></Icon>,
  },
  { name: 'Outlook', icon: <OutlookIcon /> },
];

function Taskbar() {
  return (
    <div className="flex h-[30px] shrink-0 items-end border-t-2 border-[#3a86ee] bg-linear-to-b from-[#2f6fe0] via-[#245edb] to-[#1f50c4]">
      <button
        type="button"
        className="flex h-[26px] w-[120px] shrink-0 items-center gap-2 rounded-r-xl bg-linear-to-b from-[#5bb558] via-[#3b983c] to-[#2f7f30] pl-[13px] font-['Open_Sans',sans-serif] text-[20px] leading-[22px] font-bold text-white italic [text-shadow:1px_1px_2px_#1c4a1c]"
      >
        <Icon w={22} h={18}>
          <path d="M3 3c3-2 5-1 7 0L9 9C7 7.500 5 7.500 2 9z" fill="#ee6b3b" />
          <path d="M11.500 3.500c3 1.500 5 1 8 0l-1 6c-3 1-5 1-8 0z" fill="#8cd14c" />
          <path d="M1.500 10.500c3-1.500 5-1 7 0l-1 6c-2-1-4-1.500-7 0z" fill="#7aa6f5" />
          <path d="M10 11c3 1.500 5 1 8 0l-1 6c-3 1-5 1-8 0z" fill="#f9d44c" />
        </Icon>
        start
      </button>
      <div className="flex h-[26px] flex-1 items-center">
        <span className="mr-[6px] ml-[14px]"><Grip dark /></span>
        {quickLaunch.map((app) => (
          <button key={app.name} type="button" aria-label={app.name} className="flex w-[29px] shrink-0 items-center justify-center">
            {app.icon}
          </button>
        ))}
        <button type="button" aria-label="More programs" className="ml-[22px] self-start">
          <Icon w={12} h={10}>
            <path d="M1 2l3 3-3 3M6 2l3 3-3 3" stroke="#e6effc" strokeWidth="1.300" />
          </Icon>
        </button>
        <span className="ml-[9px] mr-[6px]"><Grip dark /></span>
        <button type="button" className="flex h-6 w-[65px] items-center justify-center gap-1 bg-[#1d4aad] text-[13px] font-bold text-white">
          <ExcelIcon />2
          <span className="ml-[6px]">
            <Icon w={7} h={4}><path d="M0 0h7L3.500 4z" fill="#fff" /></Icon>
          </span>
        </button>
        <div className="ml-[29px] flex w-4 flex-col gap-px">
          <button type="button" aria-label="Previous tasks" className="flex h-3 items-center justify-center border border-[#5b8be8]">
            <Icon w={10} h={6}><path d="M1 5l4-4 4 4" stroke="#fff" strokeWidth="2" /></Icon>
          </button>
          <button type="button" aria-label="Next tasks" className="flex h-3 items-center justify-center border border-[#5b8be8]">
            <Icon w={10} h={6}><path d="M1 1l4 4 4-4" stroke="#fff" strokeWidth="2" /></Icon>
          </button>
        </div>
        <span className="ml-[10px] mr-[9px]"><Grip dark /></span>
        <input
          type="text"
          aria-label="Search Desktop"
          placeholder="Search Desktop"
          className="h-[23px] w-[134px] min-w-0 bg-white pl-[5px] text-[12px] text-black placeholder-[#9a9a92] outline-none"
        />
        <button type="button" aria-label="Search" className="flex h-[23px] w-[31px] items-center justify-center border border-[#e8f0fc] bg-[#bed3f3]">
          <Icon>
            <circle cx="12" cy="6" r="4.500" fill="#e6f0fd" stroke="#3e6cb8" strokeWidth="1.600" />
            <path d="M8.500 9L3 14" stroke="#3e6cb8" strokeWidth="2.400" />
          </Icon>
        </button>
        <span className="ml-auto mr-[10px]"><Grip dark /></span>
        <Icon w={22} h={18}>
          <path d="M4 16L14 6" stroke="#0b1026" strokeWidth="4" />
          <path d="M5 14L13 6" stroke="#cfd8ea" strokeWidth="1.200" />
          <circle cx="15" cy="5" r="3" fill="#1c2038" stroke="#d8e0ef" />
        </Icon>
      </div>
      <div className="flex h-[27px] w-[261px] shrink-0 items-center gap-[3px] bg-linear-to-b from-[#2ba3f2] via-[#139aed] to-[#0f83dc]">
        <button type="button" aria-label="Show hidden icons">
          <Icon>
            <circle cx="10" cy="8" r="7.500" fill="#2f84e8" stroke="#a8d2fa" />
            <path d="M12 4L8 8l4 4" stroke="#fff" strokeWidth="2" />
          </Icon>
        </button>
        <Icon><rect x="2" y="1" width="16" height="14" fill="#f6f2ea" stroke="#b9b0a0" /><path d="M6 11h8M7 13h6M6 8h7c4 0 2 3 0 3" stroke="#3c5f9a" strokeWidth="1.200" /><path d="M10 2c3 2-2 3 1 5" stroke="#d65a2a" strokeWidth="1.400" /></Icon>
        <OutlookIcon />
        <Icon><circle cx="12" cy="6" r="5" fill="#e7f4fe" stroke="#a3cdf2" /><path d="M8 10l-5 4" stroke="#28488c" strokeWidth="2.400" /></Icon>
        <Icon><rect x="2" y="3" width="8" height="5" fill="#8a8177" /><rect x="11" y="1" width="8" height="6" fill="#f08a2b" /><rect x="2" y="9" width="8" height="6" fill="#e88636" /><rect x="11" y="9" width="8" height="5" fill="#b0784a" /></Icon>
        <Snowflake color="#1620b4" core="#e8edfc" />
        <Icon><ellipse cx="10" cy="8" rx="9" ry="7.500" fill="#39715e" /><path d="M3 11C5 2 12 1 16 3M6 13c2-7 7-7 12-6" stroke="#a8c8b0" strokeWidth="2" /></Icon>
        <Icon><rect x="1" y="1" width="18" height="12" fill="#e6e2dc" stroke="#2c2c50" /><rect x="4" y="3" width="12" height="8" fill="#1212b8" /><path d="M3 15h14" stroke="#dcd8d2" strokeWidth="2" /></Icon>
        <time className="ml-[7px] text-[12px] whitespace-nowrap text-white">2:20 PM</time>
      </div>
    </div>
  );
}

export default function App() {
  return (
    <div className={`flex h-screen flex-col overflow-hidden bg-[#c4d8f7] text-black ${FONT_UI}`}>
      <TitleBar />
      <MenuBar />
      <Toolbar />
      <FormulaBar />
      <main className={`flex min-h-0 flex-1 ${FONT_CELL}`}>
        <Sheet />
        <VerticalScroll />
      </main>
      <SheetTabs />
      <DrawingBar />
      <StatusBar />
      <Taskbar />
    </div>
  );
}
